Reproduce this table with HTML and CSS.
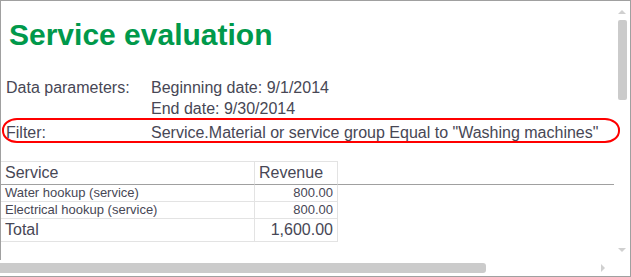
FILE: index.html
```html
<!DOCTYPE html>
<html lang="en">
<head>
    <meta charset="UTF-8">
    <meta name="viewport" content="width=device-width, initial-scale=1.0">
    <title>Service evaluation</title>
    <link rel="stylesheet" href="styles.css">
</head>
<body>
    <div class="report-frame">
        <div class="sheet">
            <h1 class="report-title">Service evaluation</h1>

            <div class="params">
                <div class="param-label">Data parameters:</div>
                <div class="param-value">Beginning date: 9/1/2014</div>
                <div class="param-label"></div>
                <div class="param-value">End date: 9/30/2014</div>
                <div class="param-label filter-row">Filter:</div>
                <div class="param-value filter-row">Service.Material or service group Equal to "Washing machines"</div>
                <span class="filter-mark"></span>
            </div>

            <table class="report-table">
                <thead>
                    <tr>
                        <th class="col-name">Service</th>
                        <th class="col-sum">Revenue</th>
                        <th class="col-rest"></th>
                    </tr>
                </thead>
                <tbody>
                    <tr>
                        <td class="col-name">Water hookup (service)</td>
                        <td class="col-sum num">800.00</td>
                        <td class="col-rest"></td>
                    </tr>
                    <tr>
                        <td class="col-name">Electrical hookup (service)</td>
                        <td class="col-sum num">800.00</td>
                        <td class="col-rest"></td>
                    </tr>
                    <tr class="total">
                        <td class="col-name">Total</td>
                        <td class="col-sum num">1,600.00</td>
                        <td class="col-rest"></td>
                    </tr>
                </tbody>
            </table>
        </div>

        <div class="vscroll">
            <span class="arrow arrow-up"></span>
            <span class="vthumb"></span>
            <span class="arrow arrow-down"></span>
        </div>

        <div class="hscroll">
            <span class="hthumb"></span>
            <span class="arrow arrow-right"></span>
        </div>
        <div class="corner"></div>
    </div>
</body>
</html>
```

FILE: styles.css
```css
:root {
    --text: #474755;
    --title: #00994b;
    --frame: #a0a0a0;
    --grid-light: #e3e3e3;
    --grid-dark: #a0a0a0;
    --thumb: #cbcbcb;
    --arrow: #d0d0d0;
}

body {
    margin: 0;
    padding: 0;
    background: #fff;
    font-family: Arial, "Liberation Sans", sans-serif;
    color: var(--text);
}

.report-frame {
    box-sizing: border-box;
    width: 631px;
    height: 277px;
    border-top: 1px solid var(--frame);
    border-right: 1px solid var(--frame);
    border-bottom: 1px solid var(--frame);
    display: grid;
    grid-template-columns: 614px 16px;
    grid-template-rows: 259px 16px;
    overflow: hidden;
}

.sheet {
    border-left: 1px solid var(--frame);
}

.report-title {
    margin: 0;
    padding: 17px 0 0 8px;
    font-size: 30px;
    line-height: 34px;
    font-weight: bold;
    color: var(--title);
}

.params {
    position: relative;
    display: grid;
    grid-template-columns: 145px auto;
    padding: 25px 0 0 5px;
    font-size: 16px;
    line-height: 21px;
}

.param-label,
.param-value {
    white-space: nowrap;
}

.filter-row {
    padding-top: 3px;
}

/* red hand-drawn oval around the filter line */
.filter-mark {
    position: absolute;
    z-index: 2;
    left: 1px;
    top: 66px;
    width: 614px;
    height: 21px;
    border: 2px solid #f00;
    border-radius: 15px / 12px;
    pointer-events: none;
}

.report-table {
    margin-top: 18px;
    width: 613px;
    border-collapse: separate;
    border-spacing: 0;
    font-size: 13px;
}

.report-table th,
.report-table td {
    padding: 0 4px;
    font-weight: normal;
    text-align: left;
    white-space: nowrap;
}

.col-name {
    width: 245px;
    border-right: 1px solid var(--grid-light);
    border-bottom: 1px solid var(--grid-light);
}

.col-sum {
    width: 74px;
    border-right: 1px solid var(--grid-light);
    border-bottom: 1px solid var(--grid-light);
}

.report-table thead th {
    font-size: 16px;
    height: 22px;
    line-height: 22px;
    border-top: 1px solid var(--grid-light);
    border-bottom: 1px solid var(--grid-dark);
    vertical-align: bottom;
}

.report-table thead th.col-rest {
    border-top: none;
}

.report-table tbody td {
    height: 16px;
    line-height: 16px;
}

.report-table tbody td.col-rest {
    border: none;
}

.report-table .num {
    text-align: right;
}

.report-table .total td {
    font-size: 16px;
    height: 22px;
    line-height: 22px;
}

.report-table .total td.col-rest {
    border: none;
}

/* scrollbars */
.vscroll {
    display: flex;
    flex-direction: column;
    align-items: center;
    padding-top: 9px;
}

.vthumb {
    display: block;
    width: 9px;
    height: 80px;
    margin-top: 6px;
    border-radius: 2px;
    background: var(--thumb);
}

.arrow {
    display: block;
    width: 0;
    height: 0;
}

.arrow-up {
    border-left: 4px solid transparent;
    border-right: 4px solid transparent;
    border-bottom: 4px solid var(--arrow);
}

.arrow-down {
    margin-top: auto;
    margin-bottom: 8px;
    border-left: 4px solid transparent;
    border-right: 4px solid transparent;
    border-top: 4px solid var(--arrow);
}

.hscroll {
    display: flex;
    align-items: center;
}

.hthumb {
    display: block;
    width: 486px;
    height: 10px;
    border-radius: 0 3px 3px 0;
    background: var(--thumb);
}

.arrow-right {
    margin-left: 115px;
    border-top: 4px solid transparent;
    border-bottom: 4px solid transparent;
    border-left: 4px solid var(--arrow);
}
```
